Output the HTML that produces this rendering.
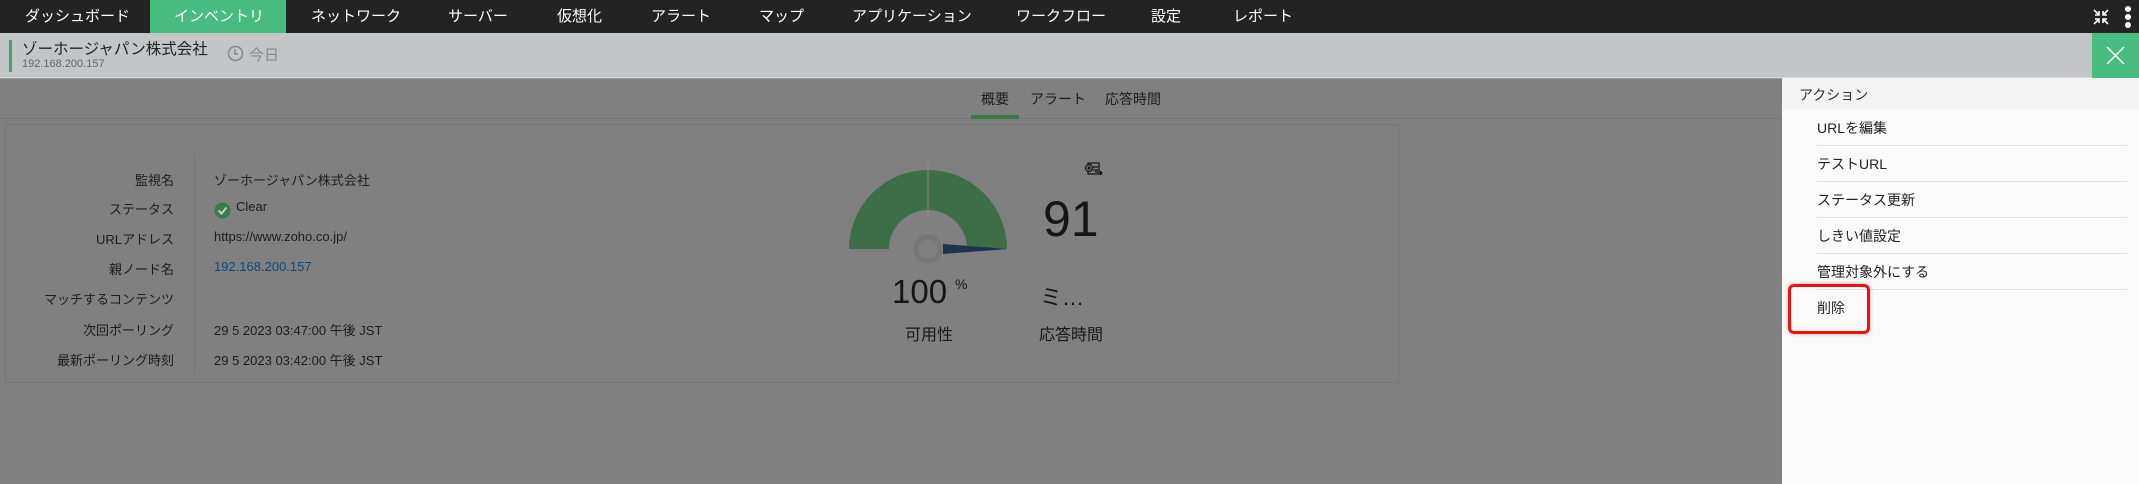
<!DOCTYPE html>
<html><head><meta charset="utf-8"><style>
*{margin:0;padding:0;box-sizing:border-box}
body{width:2139px;height:484px;overflow:hidden;position:relative;background:#808080;font-family:"Liberation Sans","Noto Sans CJK JP",sans-serif;}
.nav{position:absolute;left:0;top:0;width:2139px;height:33px;background:#232323;}
.nav span{position:absolute;top:0;line-height:33px;color:#fff;font-size:15px;}
.inv{position:absolute;left:150px;top:0;width:136px;height:33px;background:#48bb7e;}
.hdr{position:absolute;left:0;top:33px;width:2139px;height:45px;background:#c4c5c6;border-bottom:1px solid #ddd}
.a{position:absolute;white-space:nowrap}
.lbl{position:absolute;right:1965px;font-size:13px;color:#1c1c1c;white-space:nowrap}
.val{position:absolute;left:214px;font-size:13px;color:#1c1c1c;white-space:nowrap}
.side{position:absolute;left:1782px;top:78px;width:357px;height:406px;background:#fafafa;}
.item{position:absolute;left:35px;font-size:14px;color:#222;}
.sep{position:absolute;left:35px;width:310px;height:1px;background:#e3e3e3}
</style></head><body>
<div class="nav">
<div class="inv"></div>
<span style="left:25px">ダッシュボード</span>
<span style="left:174px">インベントリ</span>
<span style="left:311px">ネットワーク</span>
<span style="left:448px">サーバー</span>
<span style="left:557px">仮想化</span>
<span style="left:651px">アラート</span>
<span style="left:759px">マップ</span>
<span style="left:852px">アプリケーション</span>
<span style="left:1016px">ワークフロー</span>
<span style="left:1151px">設定</span>
<span style="left:1233px">レポート</span>
<svg class="a" style="left:2093px;top:9px" width="16" height="16" viewBox="0 0 16 16" stroke="#fff" stroke-width="1.6" fill="none"><path d="M1 1l5 5M6 2v4H2M15 1l-5 5M10 2v4h4M1 15l5-5M2 10h4v4M15 15l-5-5M14 10h-4v4"/></svg>
<svg class="a" style="left:2124px;top:5px" width="8" height="24"><circle cx="4" cy="4" r="3" fill="#fff"/><circle cx="4" cy="12" r="3" fill="#fff"/><circle cx="4" cy="20" r="3" fill="#fff"/></svg>
</div>
<div class="hdr">
<div class="a" style="left:9px;top:7px;width:3px;height:32px;background:#48a06a"></div>
<div class="a" style="left:22px;top:4px;font-size:15.5px;color:#222">ゾーホージャパン株式会社</div>
<div class="a" style="left:22px;top:25px;font-size:11px;color:#666">192.168.200.157</div>
<svg class="a" style="left:227px;top:12px" width="17" height="17"><circle cx="8.5" cy="8.5" r="7" stroke="#888" stroke-width="1.5" fill="none"/><path d="M8 4v5h3" stroke="#888" stroke-width="1.5" fill="none"/></svg>
<div class="a" style="left:249px;top:11px;font-size:15px;color:#888">今日</div>
<div class="a" style="left:2092px;top:0;width:47px;height:45px;background:#48bb7e"></div>
<svg class="a" style="left:2106px;top:13px" width="19" height="19" stroke="#fff" stroke-width="1.5"><path d="M1 1l17 17M18 1L1 18"/></svg>
</div>
<div class="a" style="left:0;top:78px;width:1782px;height:1px;background:#999"></div>
<div class="a" style="left:981px;top:89px;font-size:14px;color:#1c1c1c">概要</div>
<div class="a" style="left:1030px;top:89px;font-size:14px;color:#1c1c1c">アラート</div>
<div class="a" style="left:1105px;top:89px;font-size:14px;color:#1c1c1c">応答時間</div>
<div class="a" style="left:0;top:118px;width:1782px;height:1px;background:#777"></div>
<div class="a" style="left:971px;top:115px;width:48px;height:4px;background:#3d7a4a"></div>
<div class="a" style="left:5px;top:124px;width:1394px;height:259px;border:1px solid #767676"></div>
<div class="a" style="left:194px;top:154px;width:1px;height:220px;background:#767676"></div>
<div class="lbl" style="top:170px">監視名</div><div class="val" style="top:170px">ゾーホージャパン株式会社</div>
<div class="lbl" style="top:199px">ステータス</div>
<svg class="a" style="left:214px;top:202px" width="17" height="17"><circle cx="8.5" cy="8.5" r="8" fill="#3d7a4a"/><path d="M4.5 8.5l3 3 5-6" stroke="#ccc" stroke-width="2" fill="none"/></svg>
<div class="val" style="top:199px;left:236px">Clear</div>
<div class="lbl" style="top:229px">URLアドレス</div><div class="val" style="top:229px">https://www.zoho.co.jp/</div>
<div class="lbl" style="top:259px">親ノード名</div><div class="val" style="top:259px;color:#0e4a78">192.168.200.157</div>
<div class="lbl" style="top:289px">マッチするコンテンツ</div>
<div class="lbl" style="top:320px">次回ポーリング</div><div class="val" style="top:320px">29 5 2023 03:47:00 午後 JST</div>
<div class="lbl" style="top:350px">最新ポーリング時刻</div><div class="val" style="top:350px">29 5 2023 03:42:00 午後 JST</div>
<svg class="a" style="left:840px;top:150px" width="300" height="200">
<path d="M9 99 A79 79 0 0 1 167 99 L127 99 A39 39 0 0 0 49 99Z" fill="#3d6e47"/>
<line x1="88" y1="10" x2="88" y2="70" stroke="#8a8a8a" stroke-width="1"/>
<circle cx="88" cy="99" r="12" stroke="#777" stroke-width="5" fill="none"/>
<path d="M103 94 L168 99 L103 104Z" fill="#1f3350"/>
<g transform="translate(245,12)" stroke="#111" fill="none" stroke-width="1.2"><rect x="3" y="1" width="11" height="11"/><circle cx="4" cy="6" r="3.5" fill="#808080"/><path d="M2 6h4M4 4v4M8 5h5M8 8h5M10 10h3"/><path d="M15 9l2 2-2 2" fill="#111"/></g>
</svg>
<div class="a" style="left:892px;top:273px;font-size:33px;color:#151515">100</div>
<div class="a" style="left:955px;top:276px;font-size:14px;color:#151515">%</div>
<div class="a" style="left:1043px;top:190px;font-size:50px;color:#151515">91</div>
<div class="a" style="left:1040px;top:280px;font-size:22px;color:#151515">ミ…</div>
<div class="a" style="left:905px;top:321px;font-size:16px;color:#151515">可用性</div>
<div class="a" style="left:1039px;top:321px;font-size:16px;color:#151515">応答時間</div>
<div class="side">
<div class="a" style="left:0;top:0;width:357px;height:32px;background:#f3f3f3"></div>
<div class="a" style="left:17px;top:7px;font-size:14px;color:#333">アクション</div>
<div class="item" style="top:40px">URLを編集</div><div class="sep" style="top:67px"></div>
<div class="item" style="top:76px">テストURL</div><div class="sep" style="top:103px"></div>
<div class="item" style="top:112px">ステータス更新</div><div class="sep" style="top:139px"></div>
<div class="item" style="top:148px">しきい値設定</div><div class="sep" style="top:175px"></div>
<div class="item" style="top:184px">管理対象外にする</div><div class="sep" style="top:211px"></div>
<div class="item" style="top:220px">削除</div>
<div class="a" style="left:6px;top:206px;width:82px;height:50px;border:3px solid #f01010;border-radius:6px;box-shadow:0 0 4px rgba(0,0,0,.3)"></div>
</div>
</body></html>
